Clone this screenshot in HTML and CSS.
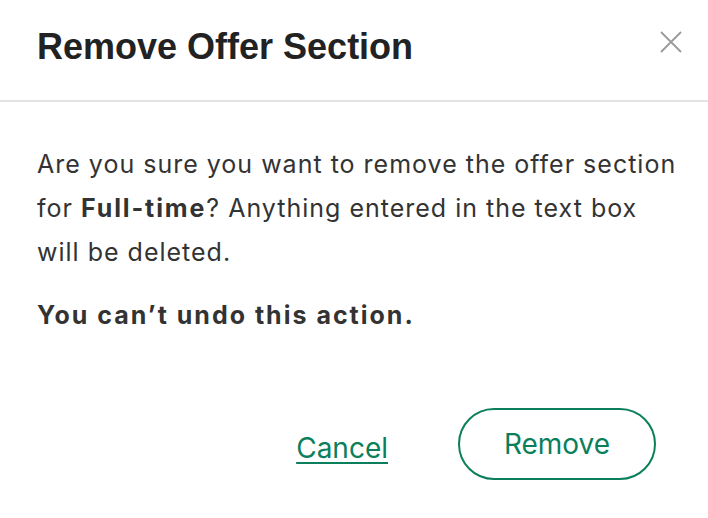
FILE: index.html
```html
<!DOCTYPE html>
<html>
<head>
<meta charset="utf-8">
<link rel="stylesheet" href="styles.css">
</head>
<body>
<div class="modal">
  <div class="header">
    <h1 class="title">Remove Offer Section</h1>
    <button class="close" aria-label="Close">
      <svg width="22" height="22" viewBox="0 0 22 22"><path d="M1 1 L21 21 M21 1 L1 21" stroke="#9a9a9a" stroke-width="1.8" fill="none"/></svg>
    </button>
  </div>
  <div class="body">
    <p class="text">Are you sure you want to remove the offer section<br>for <b>Full-time</b>? Anything entered in the text box<br>will be deleted.</p>
    <p class="warn">You can’t undo this action.</p>
  </div>
  <div class="footer">
    <a class="cancel" href="#">Cancel</a>
    <button class="remove">Remove</button>
  </div>
</div>
</body>
</html>
```
FILE: styles.css
```css
html, body { margin: 0; padding: 0; background: #fff; }
body { font-family: Inter, "Noto Sans", sans-serif; color: #333; }
.modal { width: 708px; height: 518px; display: flex; flex-direction: column; }
.header { height: 100px; border-bottom: 2px solid #e3e3e3; display: flex; justify-content: space-between; align-items: flex-start; padding: 0 26px 0 37px; }
.title { margin: 26px 0 0; font-family: "Liberation Sans", Arial, sans-serif; font-weight: 700; font-size: 36px; color: #222; letter-spacing: 0; }
.close { background: none; border: 0; padding: 0; margin-top: 31px; width: 22px; height: 22px; cursor: pointer; }
.body { padding: 40px 20px 0 37px; }
.text { margin: 0; font-size: 25px; line-height: 44px; letter-spacing: 1px; white-space: nowrap; }
.text b { letter-spacing: 1.9px; }
.warn { margin: 19px 0 0; font-size: 25px; font-weight: 700; line-height: 44px; letter-spacing: 2px; color: #333; }
.footer { display: flex; justify-content: flex-end; align-items: center; gap: 70px; padding: 71px 52px 0 0; }
.cancel { color: #0b7f5c; font-size: 28px; margin-top: 8px; text-decoration: underline; text-underline-offset: 4px; text-decoration-thickness: 2px; }
.remove { width: 198px; height: 72px; border: 2px solid #0b7f5c; border-radius: 36px; background: #fff; color: #0b7f5c; font-family: Inter, "Noto Sans", sans-serif; font-size: 28px; }
```
